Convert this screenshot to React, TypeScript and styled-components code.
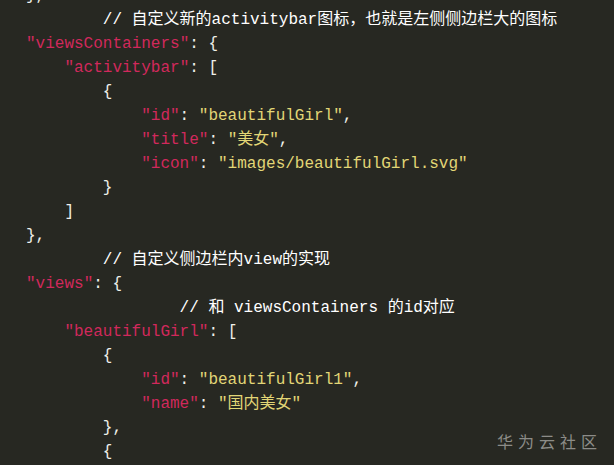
import React from "react";
import styled, { createGlobalStyle } from "styled-components";

const Global = createGlobalStyle`
  html, body { margin: 0; padding: 0; background: #272822; }
  body { overflow: hidden; }
`;

const Page = styled.div`
  position: relative;
  width: 614px;
  height: 465px;
  overflow: hidden;
  background: #272822;
`;

const Code = styled.div`
  display: flex;
  flex-direction: column;
  margin-top: -16px;
  padding-left: 26px;
  font-family: "Liberation Mono", "Noto Sans CJK SC", monospace;
  font-size: 16px;
  line-height: 24px;
  color: #f8f8f2;
  white-space: pre;
`;

const Line = styled.div<{ $indent: number }>`
  height: 24px;
  padding-left: ${(p) => p.$indent * 38.4}px;
`;

const Key = styled.span`
  color: #d1295c;
`;
const Str = styled.span`
  color: #e2d676;
`;
const Punc = styled.span`
  color: #f0f0ea;
`;
const Comment = styled.span`
  color: #ffffff;
`;

const Watermark = styled.div`
  position: absolute;
  right: 12px;
  bottom: 14px;
  font-family: "Noto Sans CJK SC", sans-serif;
  font-size: 16px;
  letter-spacing: 5px;
  color: #8c8c88;
  line-height: 20px;
`;

const K = ({ k }: { k: string }) => (
  <>
    <Key>"{k}"</Key>
    <Punc>: </Punc>
  </>
);

export default function App() {
  return (
    <Page>
      <Global />
      <Code>
        <Line $indent={0}><Punc>{"},"}</Punc></Line>
        <Line $indent={2}><Comment>// 自定义新的activitybar图标，也就是左侧侧边栏大的图标</Comment></Line>
        <Line $indent={0}><K k="viewsContainers" /><Punc>{"{"}</Punc></Line>
        <Line $indent={1}><K k="activitybar" /><Punc>[</Punc></Line>
        <Line $indent={2}><Punc>{"{"}</Punc></Line>
        <Line $indent={3}><K k="id" /><Str>"beautifulGirl"</Str><Punc>,</Punc></Line>
        <Line $indent={3}><K k="title" /><Str>"美女"</Str><Punc>,</Punc></Line>
        <Line $indent={3}><K k="icon" /><Str>"images/beautifulGirl.svg"</Str></Line>
        <Line $indent={2}><Punc>{"}"}</Punc></Line>
        <Line $indent={1}><Punc>]</Punc></Line>
        <Line $indent={0}><Punc>{"},"}</Punc></Line>
        <Line $indent={2}><Comment>// 自定义侧边栏内view的实现</Comment></Line>
        <Line $indent={0}><K k="views" /><Punc>{"{"}</Punc></Line>
        <Line $indent={4}><Comment>// 和 viewsContainers 的id对应</Comment></Line>
        <Line $indent={1}><K k="beautifulGirl" /><Punc>[</Punc></Line>
        <Line $indent={2}><Punc>{"{"}</Punc></Line>
        <Line $indent={3}><K k="id" /><Str>"beautifulGirl1"</Str><Punc>,</Punc></Line>
        <Line $indent={3}><K k="name" /><Str>"国内美女"</Str></Line>
        <Line $indent={2}><Punc>{"},"}</Punc></Line>
        <Line $indent={2}><Punc>{"{"}</Punc></Line>
      </Code>
      <Watermark>华为云社区</Watermark>
    </Page>
  );
}
